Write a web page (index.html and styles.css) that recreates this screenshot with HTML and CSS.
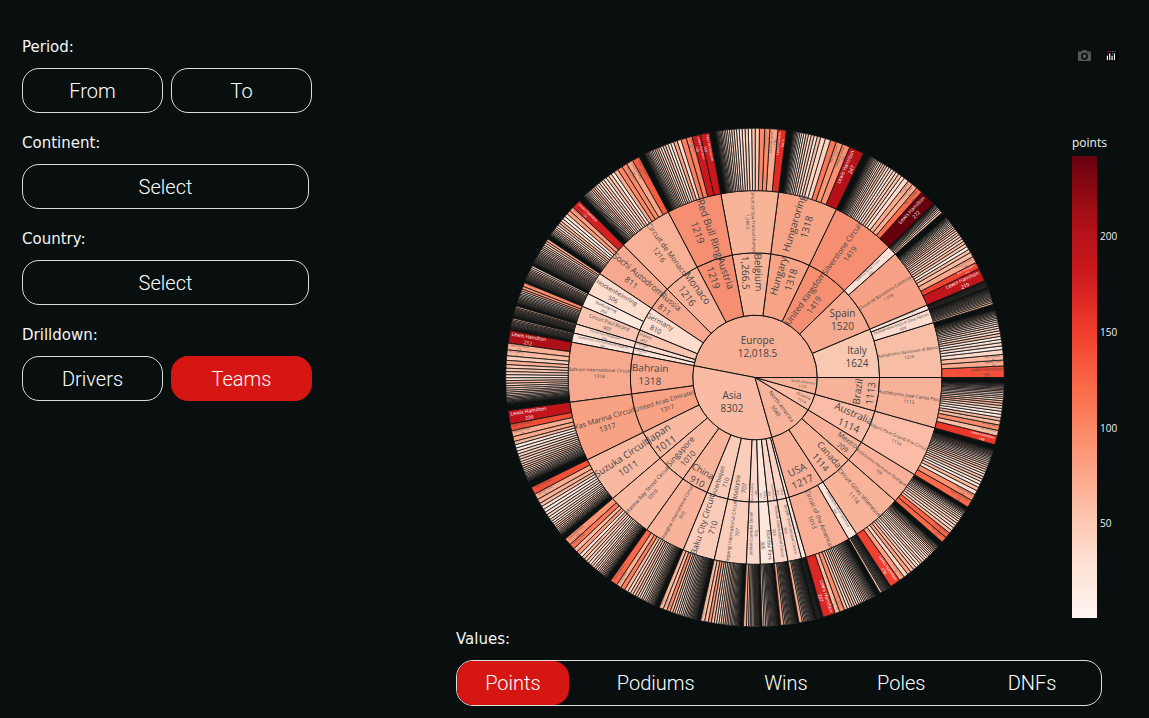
FILE: index.html
```html
<!DOCTYPE html>
<html lang="en">
<head>
<meta charset="utf-8">
<meta name="viewport" content="width=device-width, initial-scale=1">
<title>Season drilldown</title>
<link rel="stylesheet" href="styles.css">
</head>
<body>
<main class="page">
  <form class="filters">
    <fieldset class="group">
      <legend class="caption">Period:</legend>
      <div class="pair">
        <select class="pill" aria-label="From"><option>From</option></select>
        <select class="pill" aria-label="To"><option>To</option></select>
      </div>
    </fieldset>
    <div class="group">
      <label class="caption" for="continent">Continent:</label>
      <select class="pill pill-wide" id="continent"><option>Select</option></select>
    </div>
    <div class="group">
      <label class="caption" for="country">Country:</label>
      <select class="pill pill-wide" id="country"><option>Select</option></select>
    </div>
    <fieldset class="group">
      <legend class="caption">Drilldown:</legend>
      <div class="pair">
        <button class="pill" type="button">Drivers</button>
        <button class="pill pill-active" type="button">Teams</button>
      </div>
    </fieldset>
  </form>
  <section class="results">
    <div class="modebar">
      <button class="tool" type="button" aria-label="Download plot">
        <svg viewBox="0 0 1000 1000" width="13" height="13"><path fill="#555858" fill-rule="evenodd" d="M500 400a150 150 0 1 0 0 300a150 150 0 0 0 0-300zM100 200H290L340 90Q350 70 375 70H625Q650 70 660 90L710 200H900Q1000 200 1000 300V830Q1000 930 900 930H100Q0 930 0 830V300Q0 200 100 200zM500 280a270 270 0 1 0 0 540a270 270 0 0 0 0-540zM850 290h60v60h-60z"/></svg>
      </button>
      <a class="tool tool-logo" href="#" aria-label="Plotly">
        <svg viewBox="0 0 132 132" width="13" height="13"><rect width="132" height="132" rx="18" fill="#000"/><g fill="#fff"><rect x="18" y="66" width="12" height="48" rx="6"/><rect x="42" y="42" width="12" height="72" rx="6"/><rect x="66" y="66" width="12" height="48" rx="6"/><rect x="90" y="42" width="12" height="72" rx="6"/></g><g fill="#7ea6d8"><circle cx="102" cy="24" r="6"/><circle cx="78" cy="24" r="6"/><circle cx="78" cy="48" r="6"/></g><g fill="#f0457d"><circle cx="54" cy="24" r="6"/><circle cx="30" cy="24" r="6"/><circle cx="30" cy="48" r="6"/></g></svg>
      </a>
    </div>
    <svg class="chart" id="chart" viewBox="0 0 693 558" role="img" aria-label="Points by continent, country, circuit and driver">
      <defs>
        <linearGradient id="reds" x1="0" y1="1" x2="0" y2="0">
          <stop offset="0" stop-color="#fff5f0"/><stop offset=".125" stop-color="#fee0d2"/><stop offset=".25" stop-color="#fcbba1"/><stop offset=".375" stop-color="#fc9272"/><stop offset=".5" stop-color="#fb6a4a"/><stop offset=".625" stop-color="#ef3b2c"/><stop offset=".75" stop-color="#cb181d"/><stop offset=".875" stop-color="#a50f15"/><stop offset="1" stop-color="#67000d"/>
        </linearGradient>
      </defs>
      <g id="slices"></g>
      <g id="labels"></g>
      <rect x="616" y="86" width="25" height="462" fill="url(#reds)"/>
      <g class="scale">
        <text class="scale-title" x="616" y="77">points</text>
        <text x="644" y="170">200</text>
        <text x="644" y="266">150</text>
        <text x="644" y="362">100</text>
        <text x="644" y="457">50</text>
      </g>
    </svg>
    <fieldset class="values">
      <legend class="caption">Values:</legend>
      <div class="tabs">
        <label class="tab"><input type="radio" name="value" checked><span>Points</span></label>
        <label class="tab"><input type="radio" name="value"><span>Podiums</span></label>
        <label class="tab"><input type="radio" name="value"><span>Wins</span></label>
        <label class="tab"><input type="radio" name="value"><span>Poles</span></label>
        <label class="tab"><input type="radio" name="value"><span>DNFs</span></label>
      </div>
    </fieldset>
  </section>
</main>
<script src="chart.js"></script>
</body>
</html>
```
FILE: styles.css
```css
* { box-sizing: border-box; }
body {
  margin: 0;
  background: #090f0f;
  color: #f4f4f4;
  font-family: Roboto, "Open Sans", sans-serif;
}
.page {
  display: grid;
  grid-template-columns: 290px minmax(0, 1fr);
  column-gap: 144px;
  padding-left: 22px;
}
fieldset { border: 0; margin: 0; padding: 0; min-width: 0; }
legend { padding: 0; }
.filters {
  display: flex;
  flex-direction: column;
  gap: 19px;
  padding-top: 35px;
}
.caption {
  display: block;
  margin-bottom: 10px;
  font: 15px/22px "DejaVu Sans", sans-serif;
}
.filters { gap: 19px; padding-top: 36px; }
.pair { display: grid; grid-template-columns: 1fr 1fr; gap: 8px; }
.pill {
  appearance: none;
  display: block;
  width: 100%;
  height: 45px;
  padding: 0 10px;
  border: 1px solid #dcdede;
  border-radius: 17px;
  background: transparent;
  color: #fff;
  font: 300 20px/24px Roboto, "Open Sans", sans-serif;
  text-align: center;
  text-align-last: center;
}
.pill-wide { width: 287px; }
.pill-active { background: #d51612; border-color: #d51612; }
.modebar {
  display: flex;
  justify-content: flex-end;
  align-items: center;
  gap: 14px;
  padding: 49px 31px 0 0;
}
.tool { display: block; height: 13px; padding: 0; border: 0; background: none; }
.tool svg, .chart { display: block; }
.chart { width: 100%; margin-top: 8px; font-family: "Open Sans", sans-serif; }
.slice { stroke: #111414; stroke-width: 1; }
.slice-outer { stroke-width: 0.8; }
.label { fill: #444; text-anchor: middle; }
.label-light { fill: #fff; }
.scale { fill: #f2f2f2; font-size: 10px; }
.scale-title { font-size: 12px; }
.values { margin-right: 47px; }
.tabs {
  display: grid;
  grid-template-columns: 122fr 154fr 107fr 124fr 138fr;
  height: 46px;
  border: 1px solid #dcdede;
  border-radius: 17px;
  color: #fff;
  font: 300 20px/44px Roboto, "Open Sans", sans-serif;
  text-align: center;
}
.tab { position: relative; }
.tab input { position: absolute; opacity: 0; margin: 0; }
.tab span { display: block; }
.tab input:checked + span { margin-right: 10px; border-radius: 16px; background: #d51612; }
```
FILE: chart.js
```js
const CX = 299, CY = 307.5, RING = 62.3, TOTAL = 25587.5;
const NS = "http://www.w3.org/2000/svg";
const LH = "Lewis Hamilton", MV = "Max Verstappen", SV = "Sebastian Vettel", NR = "Nico Rosberg";
const REDS = [[255,245,240],[254,224,210],[252,187,161],[252,146,114],[251,106,74],[239,59,44],[203,24,29],[165,15,21],[103,0,13]];

// Node: [name, value, colour, {label options}, children]
// Circuit: the last item lists its leading drivers as [points, colour value, name]
const DATA = [
  ["Europe", 12018.5, "#f7b096", { x: 301.5, y: 276.5 }, [
    ["Italy", 1624, "#f8c8b0", { x: 401, y: 287 }, [
      ["Autodromo Nazionale di Monza", 1216, "#f8bda5", {}, [[190,138,LH],[98,72,SV],[92,62,MV],[80,34]]],
      ["Autodromo Enzo e Dino Ferrari", 306, "#fddccf", { cap: 4 }, [[32,60],[28,50]]],
      ["Autodromo Internazionale del Mugello", 102, "#fee4da", { cap: 2 }, [[12,40]]]]],
    ["Spain", 1520, "#f6aa8f", { x: 386.5, y: 249.5 }, [
      ["Circuit de Barcelona-Catalunya", 1318, "#f7a286", {}, [[219,190,LH],[112,148,MV],[108,75,SV],[80,60]]],
      ["Valencia Street Circuit", 202, "#fde0d5", { cap: 3 }, [[34,60],[30,40]]]]],
    ["United Kingdom", 1419, "#f68f72", {}, [
      ["Silverstone Circuit", 1419, "#f68f72", {}, [[272,242,LH],[105,120,MV],[92,70,SV],[88,74,NR],[80,36]]]]],
    ["Hungary", 1318, "#f7a486", { r: 104 }, [
      ["Hungaroring", 1318, "#f7a486", { r: 159 }, [[247,200,LH],[125,92,SV],[110,88,MV],[98,112],[88,42],[80,38]]]]],
    ["Belgium", 1266.5, "#f7b499", { r: 105, value: "1,266.5" }, [
      ["Circuit de Spa-Francorchamps", 1266.5, "#f7b499", { value: "1,266.5" }, [[141.5,165,LH],[130,76,SV],[86,96,MV],[85,98],[70,52]]]]],
    ["Austria", 1219, "#f68f72", { r: 108 }, [
      ["Red Bull Ring", 1219, "#f68f72", {}, [[152,182,MV],[140,182,LH],[98,106,NR],[90,106],[65,35],[62,80]]]]],
    ["Monaco", 1216, "#f8b197", { r: 106 }, [
      ["Circuit de Monaco", 1216, "#f8b197", {}, [[125,130,LH],[108,76,SV],[90,95,MV],[85,100],[70,70]]]]],
    ["Russia", 811, "#f7a98f", { cap: 8, r: 113 }, [
      ["Sochi Autodrom", 811, "#f7a98f", {}, [[151,175,LH],[75,82,SV],[68,82]]]]],
    ["Germany", 810, "#fddccd", { cap: 7, r: 110 }, [
      ["Hockenheimring", 506, "#fddccd", { cap: 6, r: 162 }, [[42,70],[38,72],[36,38]]],
      ["Nürburgring", 304, "#fde6dc", { cap: 4, r: 165 }, [[32,34],[30,28]]]]],
    ["France", 407, "#f9c5b0", { cap: 4, r: 117 }, [
      ["Circuit Paul Ricard", 407, "#f9c5b0", { cap: 5 }, [[66,95,LH],[45,86],[34,80]]]]],
    ["Portugal", 204, "#fddcd0", { cap: 3, r: 117 }, [
      ["Circuit Park Zandvoort", 204, "#fddcd0", { cap: 3 }, [[26,58],[20,60]]]]],
    ["Netherlands", 204, "#fde3d9", { cap: 2, r: 117 }, [
      ["Autódromo Internacional do Algarve", 204, "#fde3d9", { cap: 3 }, [[26,60],[22,40]]]]]]],
  ["Asia", 8302, "#f9bba4", { x: 276, y: 332 }, [
    ["Bahrain", 1318, "#f7a98f", { r: 105 }, [
      ["Bahrain International Circuit", 1318, "#f7a98f", {}, [[212,208,LH],[110,68,SV],[98,60,NR],[75,45],[70,70]]]]],
    ["United Arab Emirates", 1317, "#f8a283", { r: 93 }, [
      ["Yas Marina Circuit", 1317, "#f8a283", {}, [[226,190,LH],[112,140,MV],[98,72,SV],[80,74]]]]],
    ["Japan", 1011, "#f9b9a1", { r: 111 }, [
      ["Suzuka Circuit", 1011, "#f9b9a1", {}, [[125,138,LH],[98,72,SV],[75,68]]]]],
    ["Singapore", 1010, "#f9b9a1", { cap: 8, r: 105 }, [
      ["Marina Bay Street Circuit", 1010, "#f9b9a1", {}, [[122,90,LH],[92,112,SV],[70,60],[65,85]]]]],
    ["China", 910, "#f9b39a", { cap: 9, r: 113, across: true }, [
      ["Shanghai International Circuit", 910, "#f9b39a", {}, [[122,122,LH],[80,68,SV],[72,105],[60,62]]]]],
    ["Azerbaijan", 710, "#fbcbb9", { cap: 6, r: 109 }, [
      ["Baku City Circuit", 710, "#fbcbb9", { cap: 9 }, [[70,65,LH],[62,60,SV],[58,98],[45,60]]]]],
    ["Malaysia", 707, "#fbcdbb", { cap: 6, r: 111 }, [
      ["Sepang International Circuit", 707, "#fbcdbb", {}, [[68,62,SV],[60,60],[50,90],[48,64]]]]],
    ["Saudi Arabia", 306, "#fcd6c8", { cap: 3, r: 115 }, [
      ["Jeddah Corniche Circuit", 306, "#fcd6c8", { cap: 4 }, [[50,75],[34,56]]]]],
    ["Turkey", 305, "#fde6dc", { cap: 3, r: 118 }, [
      ["Istanbul Park", 305, "#fde6dc", { cap: 5, r: 168 }, [[32,40],[28,28],[26,30]]]]],
    ["South Korea", 303, "#fcd6c8", { cap: 3, r: 117 }, [
      ["Korean International Circuit", 303, "#fcd6c8", { cap: 4 }, [[52,82],[26,50]]]]],
    ["India", 303, "#fcd3c4", { cap: 3, r: 117 }, [
      ["Buddh International Circuit", 303, "#fcd3c4", { cap: 4 }, [[56,76],[26,50]]]]],
    ["Qatar", 102, "#fde6dd", { cap: 1, r: 118 }, [
      ["Losail International Circuit", 102, "#fde6dd", { cap: 2 }, [[10,30]]]]]]],
  ["North America", 3040, "#f8b49b", { r: 39, fit: 38 }, [
    ["USA", 1217, "#f8af96", { r: 108, across: true }, [
      ["Circuit of the Americas", 1013, "#f8ae94", {}, [[207,168,LH],[78,62,SV],[84,96,MV],[52,60]]],
      ["Indianapolis Motor Speedway", 204, "#fde4da", { cap: 3 }, [[36,60],[18,50]]]]],
    ["Canada", 1114, "#f8b399", { cap: 9, r: 107 }, [
      ["Circuit Gilles Villeneuve", 1114, "#f8b399", {}, [[178,148,LH],[92,80,SV],[72,38],[65,80],[60,62]]]]],
    ["Mexico", 709, "#f8b198", { cap: 7, r: 112 }, [
      ["Autódromo Hermanos Rodríguez", 709, "#f8b198", {}, [[98,120,LH],[92,126,MV]]]]]]],
  ["Oceania", 1114, "#fabca6", { cap: 4, r: 52 }, [
    ["Australia", 1114, "#fabca6", { r: 105 }, [
      ["Albert Park Grand Prix Circuit", 1114, "#fabca6", {}, [[128,120,LH],[108,92,SV],[70,30],[62,60]]]]]]],
  ["South America", 1113, "#f7b39a", { cap: 4, r: 48, fit: 24 }, [
    ["Brazil", 1113, "#f7b39a", { r: 110, across: true }, [
      ["Autódromo José Carlos Pace", 1113, "#f7b39a", {}, [[148,155,LH],[92,58,SV],[90,96,MV],[68,60]]]]]]]
];

const slices = document.getElementById("slices");
const labels = document.getElementById("labels");
const pen = document.createElement("canvas").getContext("2d");
pen.font = '100px "Open Sans"';

let seed = 11;
function random() {
  seed = (seed * 16807) % 2147483647;
  return seed / 2147483647;
}

function redFor(value) {
  const t = Math.min(Math.max(value / 242, 0), 1) * 8;
  const i = Math.min(Math.floor(t), 7);
  return "rgb(" + REDS[i].map((c, k) => Math.round(c + (REDS[i + 1][k] - c) * (t - i))).join(",") + ")";
}

function point(r, units) {
  const a = units / TOTAL * 2 * Math.PI;
  return (CX + r * Math.cos(a)).toFixed(2) + " " + (CY - r * Math.sin(a)).toFixed(2);
}

function wedge(level, start, size, fill) {
  const r0 = level * RING, r1 = r0 + RING, end = start + size;
  const large = size / TOTAL > 0.5 ? 1 : 0;
  const path = document.createElementNS(NS, "path");
  path.setAttribute("d", `M${point(r0, start)}L${point(r1, start)}A${r1} ${r1} 0 ${large} 0 ${point(r1, end)}L${point(r0, end)}A${r0} ${r0} 0 ${large} 1 ${point(r0, start)}Z`);
  path.setAttribute("fill", fill);
  path.setAttribute("class", level === 3 ? "slice slice-outer" : "slice");
  slices.append(path);
}

function label(name, value, size, x, y, turn, light) {
  const g = document.createElementNS(NS, "g");
  g.setAttribute("class", light ? "label label-light" : "label");
  g.setAttribute("font-size", size.toFixed(2));
  g.setAttribute("transform", `translate(${x.toFixed(1)} ${y.toFixed(1)}) rotate(${turn.toFixed(1)})`);
  [name, value].forEach((line, i) => {
    const t = document.createElementNS(NS, "text");
    t.setAttribute("y", (size * (i ? 1.01 : -0.29)).toFixed(2));
    t.textContent = line;
    g.append(t);
  });
  labels.append(g);
}

function radialLabel(name, value, start, span, opts, light) {
  const mid = (start + span / 2) / TOTAL * 360, rad = mid * Math.PI / 180;
  const size = Math.min(opts.cap || 10, (opts.fit || 63) / (pen.measureText(name).width / 100));
  const length = size * pen.measureText(name).width / 100;
  const r = opts.edge ? opts.edge - length / 2 : opts.r;
  const turn = opts.across ? 270 - mid : (mid > 90 && mid < 270 ? 180 - mid : -mid);
  label(name, value, size, CX + r * Math.cos(rad), CY - r * Math.sin(rad), turn, light);
}

function drawDrivers(start, total, leaders) {
  let at = start, left = total;
  leaders.forEach(([points, tone, name]) => {
    wedge(3, at, points, redFor(tone));
    if (name) {
      const cap = Math.min(5, points * 0.023);
      radialLabel(name, String(points), at, points, { cap, edge: 247 }, tone > 145);
    }
    at += points;
    left -= points;
  });
  const closing = total * 0.075;
  left -= closing;
  const first = Math.min(leaders[leaders.length - 1][0] * 0.92, 64);
  const weights = [];
  const count = Math.max(2, Math.round(2.15 * left / first));
  for (let i = 0; i < count; i++) weights.push(Math.pow(1 - i / count, 1.15) + 0.05);
  const sum = weights.reduce((a, b) => a + b, 0);
  weights.forEach(w => {
    const size = w / sum * left;
    wedge(3, at, size, redFor(12 + random() * 52));
    at += size;
  });
  wedge(3, at, closing, "#0b1010");
}

function draw(nodes, level, from) {
  let at = from;
  nodes.forEach(([name, value, colour, opts, children]) => {
    wedge(level, at, value, colour);
    if (opts.x) label(name, value > 10000 ? "12,018.5" : String(value), 10, opts.x, opts.y, 0);
    else radialLabel(name, opts.value || String(value), at, value, { r: (level + 0.5) * RING, ...opts });
    if (level < 2) draw(children, level + 1, at);
    else drawDrivers(at, value, children);
    at += value;
  });
}

draw(DATA, 0, 0);
```
